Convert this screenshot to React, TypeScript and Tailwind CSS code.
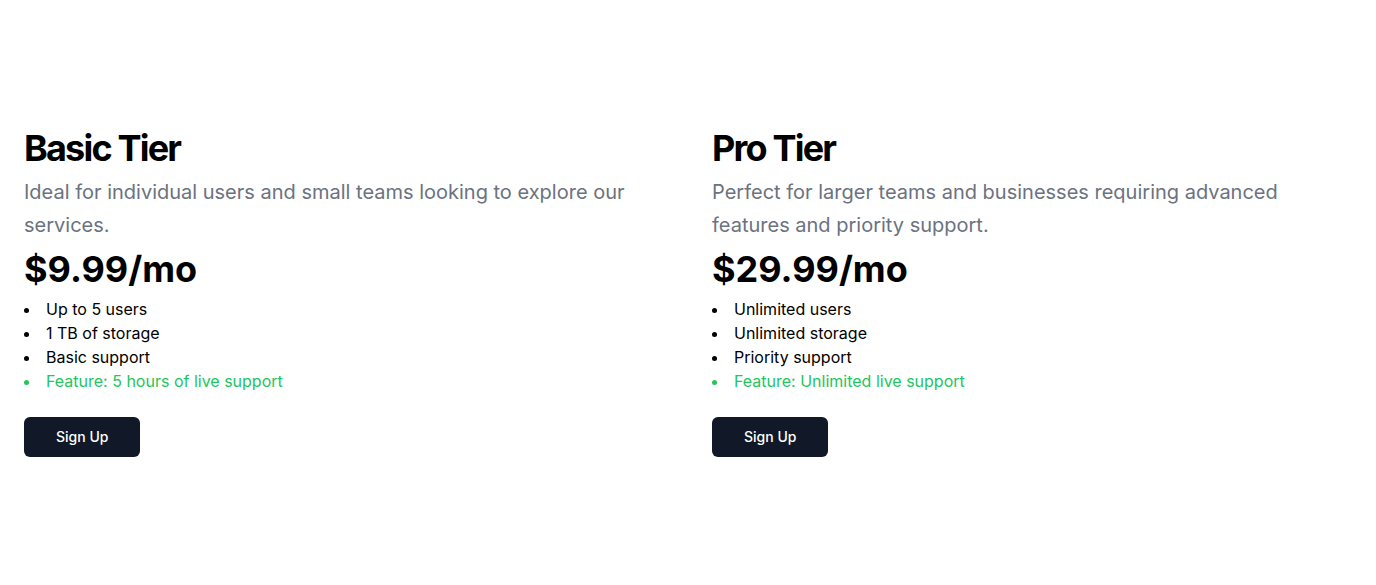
import React from "react";

const tiers = [
  {
    name: "Basic Tier",
    desc: "Ideal for individual users and small teams looking to explore our services.",
    price: "$9.99/mo",
    items: ["Up to 5 users", "1 TB of storage", "Basic support"],
    feature: "Feature: 5 hours of live support",
  },
  {
    name: "Pro Tier",
    desc: "Perfect for larger teams and businesses requiring advanced features and priority support.",
    price: "$29.99/mo",
    items: ["Unlimited users", "Unlimited storage", "Priority support"],
    feature: "Feature: Unlimited live support",
  },
];

export default function App() {
  return (
    <div
      className="min-h-[585px] bg-white py-32 px-6"
      style={{ fontFamily: "Inter, 'Noto Sans', sans-serif" }}
    >
      <div className="grid grid-cols-2 gap-12">
        {tiers.map((t) => (
          <div key={t.name} className="flex flex-col">
            <div className="flex flex-col gap-2">
              <h2 className="text-4xl font-bold tracking-tighter text-black">{t.name}</h2>
              <p className="text-xl leading-[1.625] text-[#6b7280]">{t.desc}</p>
              <p className="text-4xl font-bold text-black">{t.price}</p>
              <ul className="list-disc list-inside text-base text-black">
                {t.items.map((i) => (
                  <li key={i}>{i}</li>
                ))}
                <li className="text-[#22c55e]">{t.feature}</li>
              </ul>
            </div>
            <div className="mt-6">
              <button className="h-10 px-8 rounded-md bg-[#111827] text-white text-sm font-medium">
                Sign Up
              </button>
            </div>
          </div>
        ))}
      </div>
    </div>
  );
}
